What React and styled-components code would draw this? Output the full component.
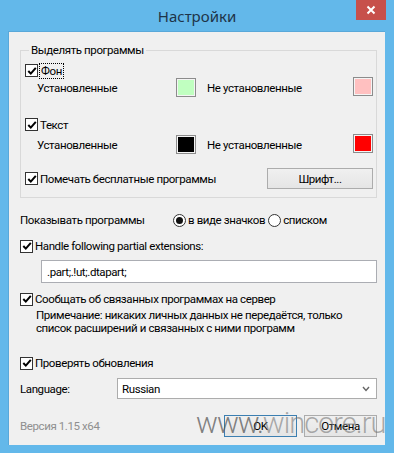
import React from 'react'
import styled, { createGlobalStyle } from 'styled-components'

const Global = createGlobalStyle`
  html, body { margin: 0; padding: 0; }
  body {
    font-family: Roboto, "Noto Sans", sans-serif;
    font-size: 11.5px;
    letter-spacing: -0.4px;
    color: #000;
  }
`

const Window = styled.div`
  position: relative;
  width: 394px;
  height: 453px;
  background: #63b8ea;
  display: flex;
  flex-direction: column;
  overflow: hidden;
`

const TitleBar = styled.div`
  height: 31px;
  display: flex;
  align-items: center;
  justify-content: center;
  position: relative;
`

const Title = styled.div`
  font-family: "Noto Sans", sans-serif;
  font-size: 15px;
  letter-spacing: 0;
  color: #1e3448;
  margin-top: 1px;
`

const CloseButton = styled.div`
  position: absolute;
  top: 0;
  right: 8px;
  width: 30px;
  height: 20px;
  background: #c7504b;
  display: flex;
  align-items: center;
  justify-content: center;
`

const Panel = styled.div`
  flex: 1;
  margin: 0 9px 8px 8px;
  background: #f0f0f0;
  border: 1px solid #59a8d9;
  border-width: 1px 0 0 1px;
  padding: 11px 8px 0 11px;
  display: flex;
  flex-direction: column;
`

const Group = styled.fieldset`
  margin: 0;
  padding: 0 0 8px 4px;
  border: 1px solid #d9d9d9;
`

const Legend = styled.legend`
  margin-left: 4px;
  padding: 0 2px;
  line-height: 15px;
`

const Row = styled.div`
  display: flex;
  align-items: center;
  height: ${p => p.$h || 16}px;
  margin-top: ${p => p.$mt || 0}px;
`

const ColorRow = styled.div`
  display: grid;
  grid-template-columns: 139px 20px 157px 20px;
  align-items: center;
  height: 18px;
  margin-top: ${p => p.$mt || 0}px;
  padding-left: 12px;
`

const Swatch = styled.div`
  width: 18px;
  height: 17px;
  background: ${p => p.$color};
  border: 1px solid #8c8c8c;
  box-shadow: inset 0 0 0 1px #f4f4f4;
  margin-top: ${p => p.$up ? -3 : 0}px;
`

const SecondLabel = styled.span`
  padding-left: 11px;
`

const CheckLabel = styled.label`
  display: flex;
  align-items: center;
  gap: 2px;
  white-space: nowrap;
`

const Box = styled.span`
  width: 11px;
  height: 11px;
  border: 1px solid #333;
  background: #fff;
  display: inline-flex;
  align-items: center;
  justify-content: center;
  flex-shrink: 0;
`

const Focus = styled.span`
  outline: 1px dotted #000;
  padding: 0 1px;
  line-height: 14px;
`

const Button = styled.div`
  width: ${p => p.$w}px;
  height: ${p => p.$h || 21}px;
  box-sizing: border-box;
  border: 1px solid ${p => p.$focused ? '#3c7fb1' : '#acacac'};
  background: linear-gradient(#f0f0f0, #e5e5e5);
  display: flex;
  align-items: center;
  justify-content: center;
  margin-left: ${p => p.$ml || 0}px;
`

const FontButton = styled(Button)`
  margin-left: auto;
  margin-right: 3px;
`

const RadioCircle = styled.span`
  width: 11px;
  height: 11px;
  border: 1px solid #333;
  border-radius: 50%;
  background: #fff;
  display: inline-flex;
  align-items: center;
  justify-content: center;
  flex-shrink: 0;
`

const Dot = styled.span`
  width: 7px;
  height: 7px;
  border-radius: 50%;
  background: #111;
`

const ShowLabel = styled.span`
  width: 153px;
`

const RadioGroup = styled.div`
  display: flex;
  gap: 3px;
`

const TextField = styled.div`
  margin: 6px 0 0 21px;
  height: 23px;
  box-sizing: border-box;
  border: 1px solid #abadb3;
  background: #fff;
  display: flex;
  align-items: center;
  padding-left: 5px;
`

const Note = styled.div`
  padding-left: 16px;
  line-height: 13px;
  margin-top: 2px;
  white-space: nowrap;
`

const Select = styled.div`
  width: 260px;
  height: 21px;
  box-sizing: border-box;
  border: 1px solid #acacac;
  background: #fff;
  display: flex;
  align-items: center;
  justify-content: space-between;
  padding: 0 6px 0 4px;
`

const LangLabel = styled.span`
  width: 97px;
`

const Version = styled.span`
  color: #8f8f8f;
  margin-right: auto;
`

const Watermark = styled.div`
  position: absolute;
  left: 196px;
  top: 406px;
  font-family: Roboto, "Noto Sans", sans-serif;
  font-weight: 300;
  font-size: 29px;
  letter-spacing: -1px;
  color: rgba(90, 90, 90, 0.75);
  pointer-events: none;
  white-space: nowrap;
`

const Light = styled.span`
  color: rgba(120, 120, 120, 0.6);
`

const Check = ({ children, focus }) => (
  <CheckLabel>
    <Box>
      <svg width="10" height="10" viewBox="0 0 10 10">
        <path d="M1.3 5 L3.8 7.6 L8.8 1.8" fill="none" stroke="#000" strokeWidth="2" />
      </svg>
    </Box>
    {focus ? <Focus>{children}</Focus> : <span>{children}</span>}
  </CheckLabel>
)

const Radio = ({ children, checked }) => (
  <CheckLabel>
    <RadioCircle>{checked && <Dot />}</RadioCircle>
    <span>{children}</span>
  </CheckLabel>
)

const App = () => {
  return (
    <>
      <Global />
      <Window>
        <TitleBar>
          <Title>Настройки</Title>
          <CloseButton>
            <svg width="10" height="10" viewBox="0 0 10 10">
              <path d="M1.5 1.5 L8.5 8.5 M8.5 1.5 L1.5 8.5" stroke="#fff" strokeWidth="2" />
            </svg>
          </CloseButton>
        </TitleBar>
        <Panel>
          <Group>
            <Legend>Выделять программы</Legend>
            <Row $h={15} $mt={5}>
              <Check focus>Фон</Check>
            </Row>
            <ColorRow>
              <span>Установленные</span>
              <Swatch $color="#c0ffc0" />
              <SecondLabel>Не установленные</SecondLabel>
              <Swatch $color="#ffc0c0" $up />
            </ColorRow>
            <Row $h={15} $mt={21}>
              <Check>Текст</Check>
            </Row>
            <ColorRow $mt={3}>
              <span>Установленные</span>
              <Swatch $color="#000000" />
              <SecondLabel>Не установленные</SecondLabel>
              <Swatch $color="#ff0000" $up />
            </ColorRow>
            <Row $h={21} $mt={15}>
              <Check>Помечать бесплатные программы</Check>
              <FontButton $w={106}>Шрифт...</FontButton>
            </Row>
          </Group>
          <Row $mt={14}>
            <ShowLabel>Показывать программы</ShowLabel>
            <RadioGroup>
              <Radio checked>в виде значков</Radio>
              <Radio>списком</Radio>
            </RadioGroup>
          </Row>
          <Row $mt={10}>
            <Check>Handle following partial extensions:</Check>
          </Row>
          <TextField>.part;.!ut;.dtapart;</TextField>
          <Row $mt={8}>
            <Check>Сообщать об связанных программах на сервер</Check>
          </Row>
          <Note>
            Примечание: никаких личных данных не передаётся, только
            <br />
            список расширений и связанных с ними программ
          </Note>
          <Row $mt={20}>
            <Check>Проверять обновления</Check>
          </Row>
          <Row $h={21} $mt={7}>
            <LangLabel>Language:</LangLabel>
            <Select>
              <span>Russian</span>
              <svg width="8" height="6" viewBox="0 0 8 6">
                <path d="M1 1 L4 4.5 L7 1" fill="none" stroke="#666" strokeWidth="1.4" />
              </svg>
            </Select>
          </Row>
          <Row $h={22} $mt={16}>
            <Version>Версия 1.15 x64</Version>
            <Button $w={73} $h={22} $focused>OK</Button>
            <Button $w={73} $h={22} $ml={7}>Отмена</Button>
          </Row>
        </Panel>
        <Watermark>www.<Light>wincore.ru</Light></Watermark>
      </Window>
    </>
  )
}

export default App
